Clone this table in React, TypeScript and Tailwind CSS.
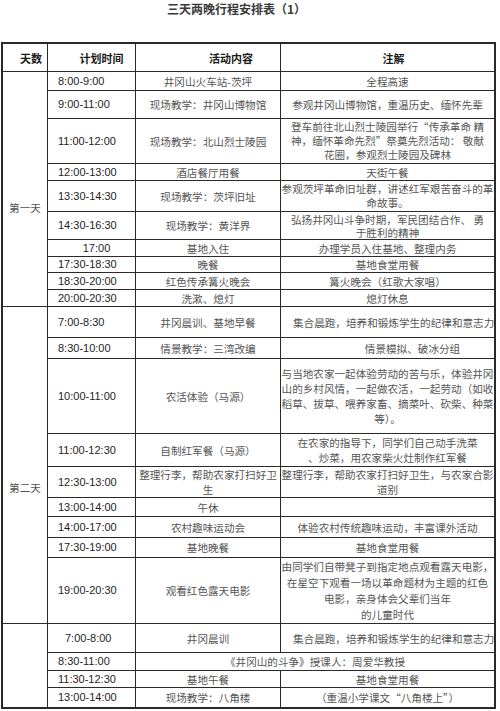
import React from 'react';

type Row = {
  time: string;
  timeCls?: string;
  act: string | string[];
  actCls?: string;
  note?: string | string[];
  noteCls?: string;
  merged?: boolean;
};

type Day = { label: string; labelCls: string; rows: Row[] };

const days: Day[] = [
  {
    label: '第一天',
    labelCls: 'pt-[128px]',
    rows: [
      { time: '8:00-9:00', act: '井冈山火车站-茨坪', note: '全程高速' },
      { time: '9:00-11:00', act: '现场教学：井冈山博物馆', note: '参观井冈山博物馆，重温历史、缅怀先辈' },
      {
        time: '11:00-12:00',
        act: '现场教学：北山烈士陵园',
        note: ['登车前往北山烈士陵园举行“传承革命 精', '神，缅怀革命先烈”祭奠先烈活动： 敬献', '花圈，参观烈士陵园及碑林'],
        noteCls: 'leading-[14px]',
      },
      { time: '12:00-13:00', act: '酒店餐厅用餐', note: '天街午餐' },
      {
        time: '13:30-14:30',
        act: '现场教学：茨坪旧址',
        note: ['参观茨坪革命旧址群，讲述红军艰苦奋斗的革', '命故事。'],
        noteCls: 'leading-[14px]',
      },
      {
        time: '14:30-16:30',
        act: '现场教学：黄洋界',
        note: ['弘扬井冈山斗争时期，军民团结合作、 勇', '于胜利的精神'],
        noteCls: 'leading-[13px]',
      },
      { time: '17:00', timeCls: 'justify-center pl-0', act: '基地入住', note: '办理学员入住基地、整理内务' },
      { time: '17:30-18:30', act: '晚餐', note: '基地食堂用餐' },
      { time: '18:30-20:00', act: '红色传承篝火晚会', note: '篝火晚会（红歌大家唱）' },
      { time: '20:00-20:30', act: '洗漱、熄灯', note: '熄灯休息' },
    ],
  },
  {
    label: '第二天',
    labelCls: 'pt-[173px]',
    rows: [
      { time: '7:00-8:30', act: '井冈晨训、基地早餐', note: '集合晨跑，培养和锻炼学生的纪律和意志力', noteCls: 'justify-start pl-[12px]' },
      { time: '8:30-10:00', act: '情景教学：三湾改编', note: '情景模拟、破冰分组', noteCls: 'pl-[50px]' },
      {
        time: '10:00-11:00',
        act: '农活体验（马源）',
        note: ['与当地农家一起体验劳动的苦与乐，体验井冈', '山的乡村风情，一起做农活，一起劳动（如收', '稻草、拔草、喂养家畜、摘菜叶、砍柴、种菜', '等）。'],
      },
      { time: '11:00-12:30', act: '自制红军餐（马源）', note: ['在农家的指导下，同学们自己动手洗菜', '、炒菜，用农家柴火灶制作红军餐'] },
      { time: '12:30-13:00', act: ['整理行李，帮助农家打扫好卫', '生'], note: ['整理行李，帮助农家打扫好卫生，与农家合影', '道别'] },
      { time: '13:00-14:00', act: '午休', note: '' },
      { time: '14:00-17:00', act: '农村趣味运动会', note: '体验农村传统趣味运动，丰富课外活动' },
      { time: '17:30-19:00', act: '基地晚餐', note: '基地食堂用餐' },
      {
        time: '19:00-20:30',
        act: '观看红色露天电影',
        note: ['由同学们自带凳子到指定地点观看露天电影，', '在星空下观看一场以革命题材为主题的红色', '电影，亲身体会父辈们当年', '的儿童时代'],
        noteCls: 'leading-[16px]',
      },
    ],
  },
  {
    label: '',
    labelCls: '',
    rows: [
      { time: '7:00-8:00', timeCls: 'pl-[17px]', act: '井冈晨训', note: '集合晨跑，培养和锻炼学生的纪律和意志力', noteCls: 'justify-start pl-[12px]' },
      { time: '8:30-11:00', act: '《井冈山的斗争》授课人：周爱华教授', merged: true },
      { time: '11:30-12:30', act: '基地午餐', note: '基地食堂用餐' },
      { time: '13:00-14:00', act: '现场教学：八角楼', note: '（重温小学课文“八角楼上”）' },
    ],
  },
];

const cjk = "font-['Noto_Sans_CJK_SC','Noto_Sans',sans-serif]";

const Lines = ({ text }: { text: string | string[] }) => {
  const list = Array.isArray(text) ? text : [text];
  return (
    <div className="w-full">
      {list.map((l, i) => (
        <div key={i} className="whitespace-nowrap">
          {l}
        </div>
      ))}
    </div>
  );
};

export default function App() {
  return (
    <div className="w-[500px] min-h-[711px] bg-white pl-px">
      <div className={`h-[42px] pt-[1px] pr-[28px] text-center text-[12px] font-semibold leading-[16px] text-[#3a3a3a] ${cjk}`}>
        三天两晚行程安排表（1）
      </div>
      <div
        className={`grid w-[495px] grid-cols-[44px_87px_144px_213px] grid-rows-[27px_18px_27px_44px_16px_30px_27px_16px_15px_16px_16px_30px_20px_74px_32px_30px_18px_20px_19px_65px_28px_17px_16px_19px] gap-px border-2 border-[#2a2a2a] bg-[#2a2a2a] text-[10.6px] leading-[15px] text-[#555] ${cjk}`}
      >
        <div className="flex items-center justify-end bg-white pr-[5px] pt-[2px] text-[11px] font-bold text-[#1a1a1a]">天数</div>
        <div className="flex items-center justify-center bg-white pl-[20px] pt-[2px] text-[11px] font-bold text-[#1a1a1a]">计划时间</div>
        <div className="flex items-center justify-center bg-white pl-[46px] pt-[2px] text-[11px] font-bold text-[#1a1a1a]">活动内容</div>
        <div className="flex items-center justify-center bg-white pl-[12px] pt-[2px] text-[11px] font-bold text-[#1a1a1a]">注解</div>

        {days.map((d, di) => (
          <React.Fragment key={di}>
            <div
              className={`bg-white text-center ${d.labelCls} ${di === 0 ? 'row-span-10' : di === 1 ? 'row-span-9' : 'row-span-4'}`}
            >
              {d.label}
            </div>
            {d.rows.map((r, ri) => (
              <React.Fragment key={ri}>
                <div
                  className={`flex items-center bg-white pl-[10px] font-['Liberation_Sans',Arial,sans-serif] text-[11px] text-[#1e1e1e] ${r.timeCls ?? ''}`}
                >
                  {r.time}
                </div>
                {r.merged ? (
                  <div className="col-span-2 flex items-center justify-center overflow-hidden bg-white text-center">
                    <Lines text={r.act} />
                  </div>
                ) : (
                  <>
                    <div className={`flex items-center justify-center overflow-hidden bg-white text-center ${r.actCls ?? ''}`}>
                      <Lines text={r.act} />
                    </div>
                    <div
                      className={`flex items-center justify-center overflow-hidden bg-white text-center ${r.noteCls ?? ''}`}
                    >
                      {r.note ? <Lines text={r.note} /> : null}
                    </div>
                  </>
                )}
              </React.Fragment>
            ))}
          </React.Fragment>
        ))}
      </div>
    </div>
  );
}
